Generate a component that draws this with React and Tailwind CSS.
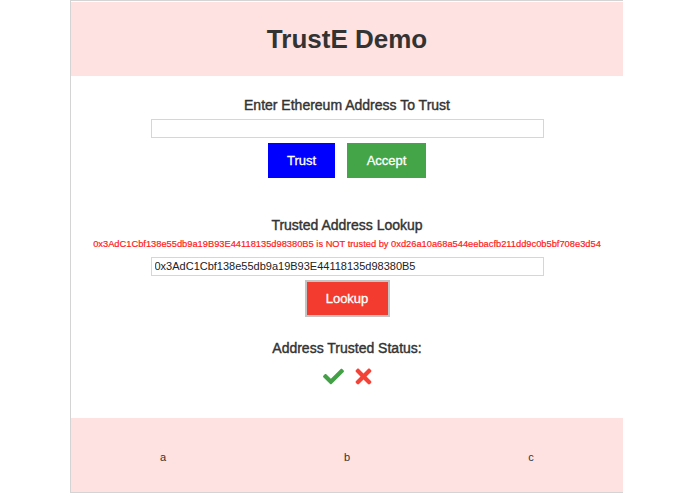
import { FaCheck, FaTimes } from 'react-icons/fa';

const sans = { fontFamily: '"Liberation Sans", Arial, sans-serif' };

function Section({ title, children }) {
  return (
    <div className="flex flex-col items-center">
      <h2 className="text-[14px] leading-[21px] font-normal text-[#333] [-webkit-text-stroke:0.4px_#333]">{title}</h2>
      {children}
    </div>
  );
}

export default function App() {
  const address = '0x3AdC1Cbf138e55db9a19B93E44118135d98380B5';
  const owner = '0xd26a10a68a544eebacfb211dd9c0b5bf708e3d54';

  return (
    <div className="min-h-[494px] bg-white" style={sans}>
      <div className="mx-auto flex w-[553px] -translate-x-[1px] flex-col border-y border-l border-[#d4d4d4] pt-[1px]">
        <header className="flex h-[74px] items-center justify-center bg-[#fee1e1]">
          <h1 className="text-[26px] font-bold text-[#333]">TrustE Demo</h1>
        </header>

        <main className="flex flex-col pt-[19px] pb-[30px]">
          <Section title="Enter Ethereum Address To Trust">
            <input
              type="text"
              className="mt-[3px] h-[19px] w-[393px] border border-[#d6d6d6] px-1 text-[11px] outline-none"
            />
            <div className="mt-[5px] flex gap-[12px]">
              <button className="h-[35px] w-[67px] bg-[#0000ff] text-[13px] text-white [-webkit-text-stroke:0.3px_#fff]">Trust</button>
              <button className="h-[35px] w-[79px] bg-[#43a547] text-[13px] text-white [-webkit-text-stroke:0.3px_#fff]">Accept</button>
            </div>
          </Section>

          <div className="mt-[37px]">
            <Section title="Trusted Address Lookup">
              <p className="mt-[2px] text-[9.3px] text-[#ff1a1a] [-webkit-text-stroke:0.2px_#ff1a1a]">
                {address} is NOT trusted by {owner}
              </p>
              <input
                type="text"
                defaultValue={address}
                className="mt-[5px] h-[19px] w-[393px] border border-[#d6d6d6] px-[3px] text-[11px] text-[#222] outline-none"
              />
              <button className="mt-[4px] h-[37px] w-[85px] border-2 border-[#c4c4c4] bg-[#f33b30] text-[13px] text-white [-webkit-text-stroke:0.3px_#fff]">
                Lookup
              </button>
            </Section>
          </div>

          <div className="mt-[21px]">
            <Section title="Address Trusted Status:">
              <div className="mt-[6px] flex items-center gap-[5px]">
                <FaCheck className="h-[21px] w-[27px] text-[#43a047]" />
                <FaTimes className="h-[23px] w-[23px] text-[#f44336]" />
              </div>
            </Section>
          </div>
        </main>

        <footer className="grid h-[74px] grid-cols-3 items-center bg-[#fee1e1] pt-[5px] text-[11px] text-[#333]">
          <div className="text-center">a</div>
          <div className="text-center">b</div>
          <div className="text-center">c</div>
        </footer>
      </div>
    </div>
  );
}
